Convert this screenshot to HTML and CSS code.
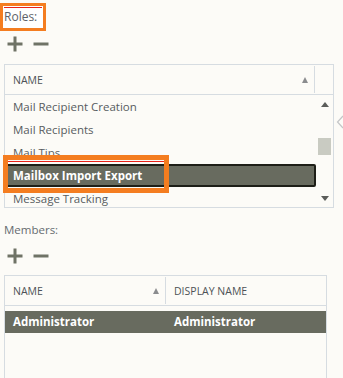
FILE: index.html
```html
<!DOCTYPE html>
<html>
<head>
<meta charset="utf-8">
<link rel="stylesheet" href="styles.css">
</head>
<body>
<div class="page">
  <div class="callout"><div class="callout-inner">Roles:</div></div>
  <div class="toolbar">
    <svg class="ico" width="16" height="16" viewBox="0 0 16 16"><path d="M8 0.5V15.5M0.5 8H15.5" stroke="#6f7366" stroke-width="3" fill="none"/></svg>
    <svg class="ico" width="16" height="16" viewBox="0 0 16 16"><path d="M0.5 8H15.5" stroke="#6f7366" stroke-width="3" fill="none"/></svg>
  </div>
  <div class="grid roles">
    <div class="head">
      <div class="hcell name-col">NAME<span class="sort"></span></div>
      <div class="hcell sb-col"></div>
    </div>
    <div class="body">
      <div class="rows">
        <div class="row">Mail Recipient Creation</div>
        <div class="row">Mail Recipients</div>
        <div class="row">Mail Tips</div>
        <div class="row sel">Mailbox Import Export</div>
        <div class="row">Message Tracking</div>
      </div>
      <div class="scrollbar">
        <span class="arr up"></span>
        <span class="track"><span class="thumb"></span></span>
        <span class="arr down"></span>
      </div>
    </div>
    <div class="hilite"></div>
  </div>
  <svg class="chev" width="8" height="14" viewBox="0 0 8 14"><path d="M7 1L1.5 7L7 13" stroke="#c4c6c8" stroke-width="1.2" fill="none"/></svg>

  <div class="label">Members:</div>
  <div class="toolbar tb2">
    <svg class="ico" width="16" height="16" viewBox="0 0 16 16"><path d="M8 0.5V15.5M0.5 8H15.5" stroke="#6f7366" stroke-width="3" fill="none"/></svg>
    <svg class="ico" width="16" height="16" viewBox="0 0 16 16"><path d="M0.5 8H15.5" stroke="#6f7366" stroke-width="3" fill="none"/></svg>
  </div>
  <div class="grid members">
    <div class="head">
      <div class="hcell c1">NAME<span class="sort"></span></div>
      <div class="hcell c2">DISPLAY NAME</div>
    </div>
    <div class="body2">
      <div class="mrow">
        <div class="c1">Administrator</div>
        <div class="c2">Administrator</div>
      </div>
    </div>
  </div>
</div>
</body>
</html>
```
FILE: styles.css
```css
* { box-sizing: border-box; }
html, body { margin: 0; padding: 0; }
body {
  background: #fcfbf7;
  font-family: "Open Sans", "Noto Sans", sans-serif;
  font-size: 11px;
  color: #555a5e;
  width: 343px;
  height: 378px;
  overflow: hidden;
}
.page { position: relative; }

.callout {
  margin-top: 3px;
  width: 46px;
  height: 28px;
  border: 3.5px solid #f47d20;
  background: #ffffff;
  padding: 1px 0 0 1px;
}
.callout-inner {
  border-top: 1px solid #e8231b;
  height: 18px;
  line-height: 17px;
  font-size: 12px;
  color: #5d6268;
  margin-right: 1px;
}

.toolbar {
  display: flex;
  gap: 10px;
  padding: 5px 0 12px 7px;
  height: 33px;
}
.tb2 { padding: 10px 0 11px 7px; height: 37px; }

.grid {
  position: relative;
  margin-left: 4px;
  border: 1px solid #d6dce1;
}
.roles { width: 330px; height: 144px; }
.members { width: 323px; height: 120px; border-bottom: none; }

.head {
  display: flex;
  height: 30px;
  border-bottom: 1px solid #d6dce1;
}
.hcell {
  position: relative;
  display: flex;
  align-items: center;
  padding-left: 8px;
  font-size: 10.5px;
  color: #4d5256;
}
.name-col { width: 310px; border-right: 1px solid #d6dce1; margin: 1px 0; }
.sb-col { flex: 1; }
.sort {
  position: absolute;
  right: 6px;
  top: 50%;
  margin-top: -3px;
  width: 0; height: 0;
  border-left: 3.5px solid transparent;
  border-right: 3.5px solid transparent;
  border-bottom: 6px solid #8a8c8e;
}

.body { display: flex; height: 112px; }
.rows { width: 311px; overflow: hidden; }
.row {
  height: 23px;
  line-height: 23px;
  padding-left: 8px;
  font-size: 11.5px;
  color: #575c60;
  white-space: nowrap;
}
.row.sel {
  background: #686b5f;
  color: #ffffff;
  font-weight: bold;
  border: 2px solid #1d1e17;
  border-radius: 2px;
  line-height: 19px;
  padding-left: 6px;
}

.scrollbar {
  flex: 1;
  display: flex;
  flex-direction: column;
  align-items: center;
  padding: 7px 0 6px;
}
.arr {
  width: 0; height: 0;
  border-left: 4px solid transparent;
  border-right: 4px solid transparent;
}
.arr.up { border-bottom: 5px solid #5b5d5a; }
.arr.down { border-top: 5px solid #5b5d5a; }
.track { flex: 1; width: 13px; padding-top: 31px; }
.thumb { display: block; width: 13px; height: 17px; background: #c9cbc2; }

.hilite {
  position: absolute;
  left: -2px;
  top: 90px;
  width: 166px;
  height: 38px;
  border: 5px solid #f47d20;
}
.hilite::before {
  content: "";
  position: absolute;
  left: 0; right: 0; top: 1px;
  border-top: 1px solid #e8231b;
}

.chev { position: absolute; left: 336px; top: 112px; }

.label {
  margin-top: 14px;
  margin-left: 4px;
  height: 16px;
  line-height: 16px;
  font-size: 11.5px;
  color: #666b70;
}

.members .c1 { width: 161px; }
.members .head .c1 { border-right: 1px solid #d6dce1; margin: 1px 0; }
.members .c2 { flex: 1; padding-left: 8px; }
.body2 { padding-top: 5px; }
.mrow {
  display: flex;
  height: 22px;
  line-height: 22px;
  background: #686b5f;
  color: #fff;
  font-weight: bold;
  font-size: 11.5px;
}
.mrow .c1 { padding-left: 8px; }
```
